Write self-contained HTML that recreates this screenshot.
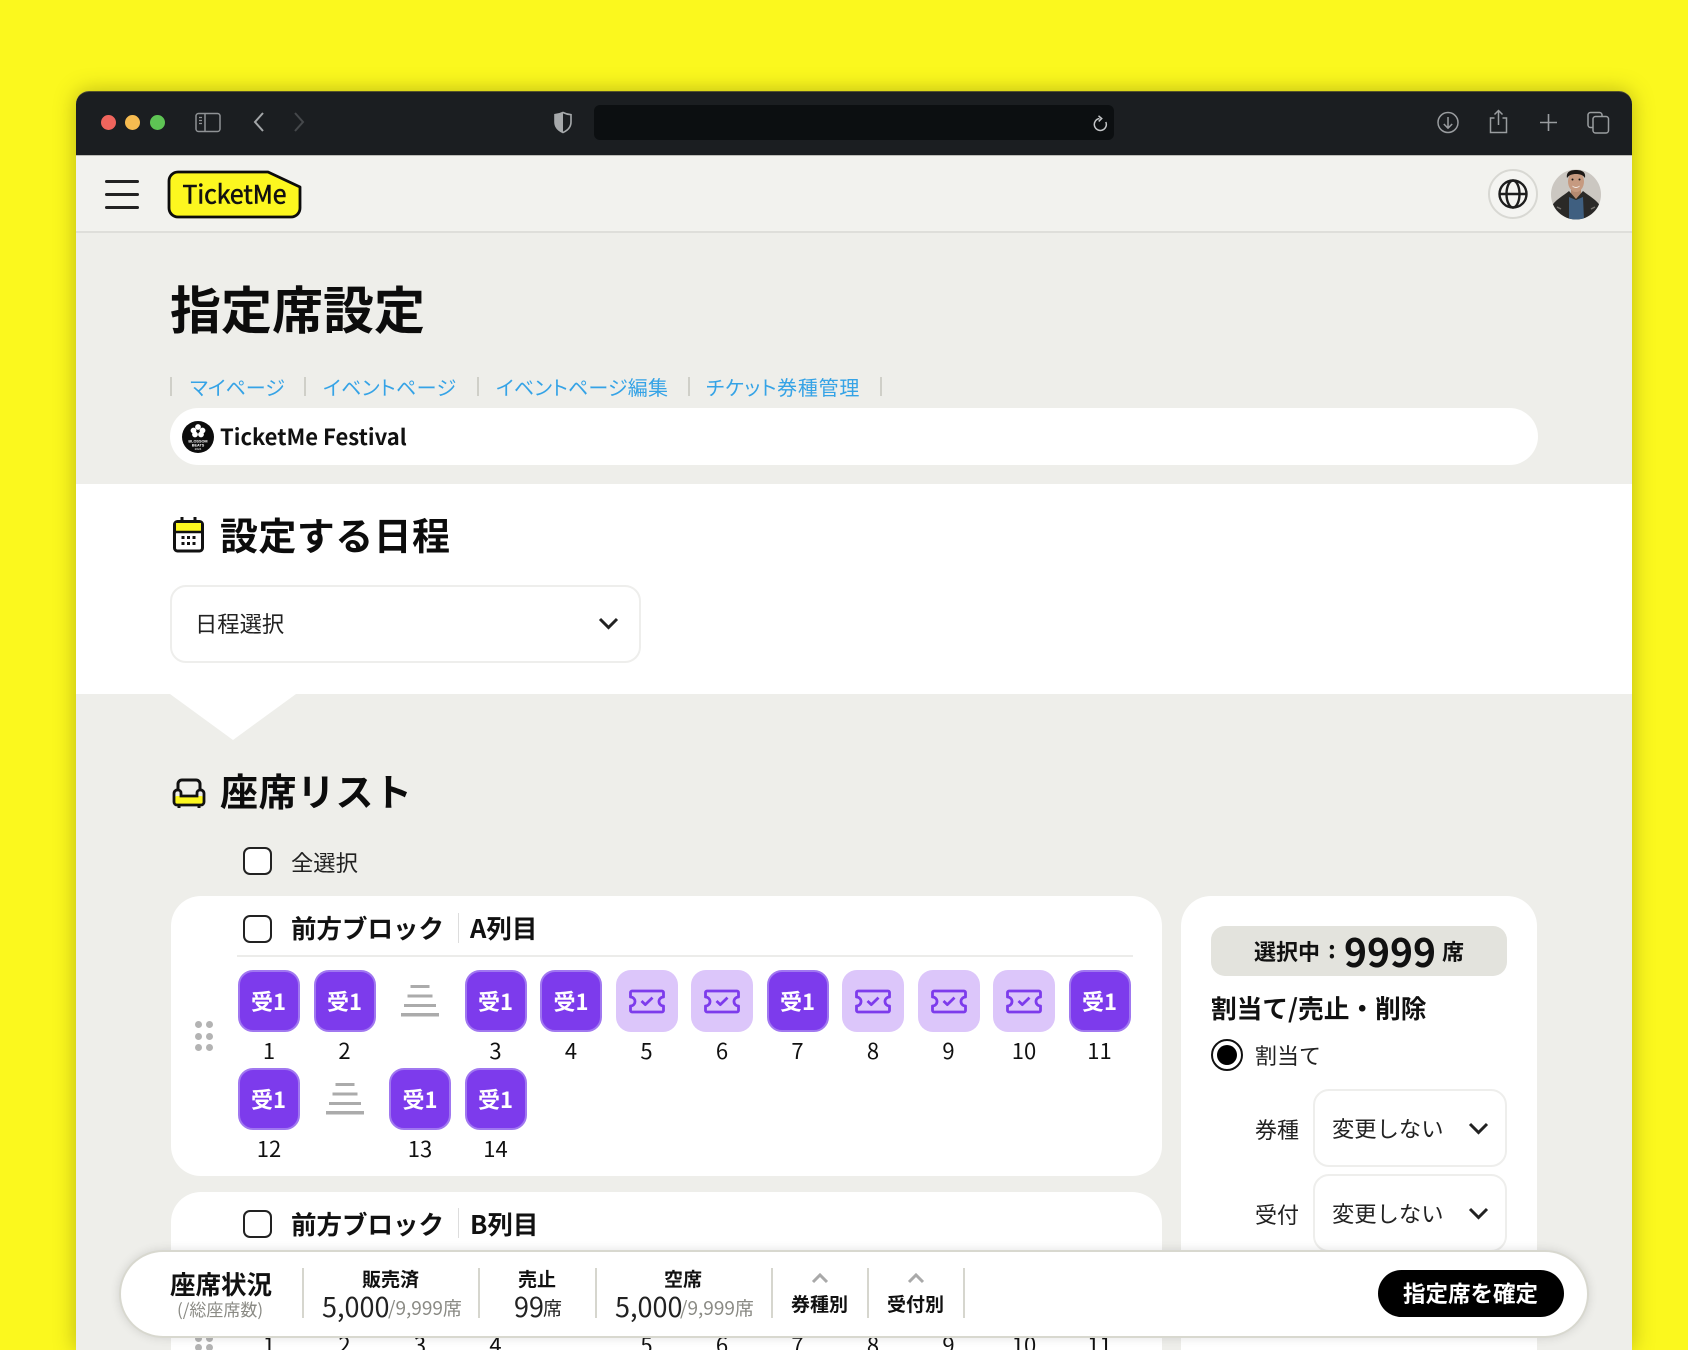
<!DOCTYPE html>
<html lang="ja"><head><meta charset="utf-8"><title>指定席設定</title>
<style>
*{box-sizing:border-box;margin:0;padding:0}
html,body{width:1688px;height:1350px;overflow:hidden;background:#fbf81e}
body{position:relative;font-family:"Noto Sans CJK JP","Liberation Sans",sans-serif;color:#111;font-feature-settings:"palt"}
.a{position:absolute}
.t{position:absolute;white-space:nowrap}
.b{font-weight:700}
#win{position:absolute;left:76px;top:91px;width:1556px;height:1259px;background:#eeeeea;border-radius:13px 13px 0 0;box-shadow:0 0 22px rgba(70,60,0,.35);overflow:hidden}
#stage{position:absolute;left:0;top:0;width:1688px;height:1350px}
.lk{color:#35a3e6;font-size:20px;line-height:30px;top:372px}
.sp{position:absolute;top:377px;width:2px;height:19px;background:#cfcfc8}
.card{position:absolute;background:#fff;border-radius:30px}
.sel{position:absolute;background:#fff;border:2px solid #eeeeec;border-radius:16px}
.cb{position:absolute;width:29px;height:28px;border:2px solid #222;border-radius:7px;background:#fff}
.s{position:absolute;width:62px;height:62px;border-radius:15px;background:#7d3bec;border:2px solid #a077f0;color:#fff;font-weight:700;font-size:22px;line-height:58px;text-align:center}
.k{position:absolute;width:62px;height:62px;border-radius:15px;background:#dcc6fa}
.k svg{position:absolute;left:13px;top:19px}
.n{position:absolute;width:62px;text-align:center;font-size:22px;line-height:30px;color:#111}
.st{position:absolute;width:38px;height:32px}
.d{position:absolute;width:7px;height:7px;border-radius:50%;background:#b3b3b3}
.dv{position:absolute;top:1268px;width:2px;height:50px;background:#d6d6ce}
.g{color:#8a8a84}
.np{font-feature-settings:normal}
</style></head><body>
<div id="win"></div>
<div id="stage">
<!-- title bar -->
<div class="a" style="left:76px;top:91px;width:1556px;height:64px;background:#1b1e21;border-radius:13px 13px 0 0;border-top:1px solid #55532a"></div>
<div class="a" style="left:76px;top:155px;width:1556px;height:78px;background:#f2f2ee;border-top:1px solid #bdbdb8;border-bottom:2px solid #dededa"></div>
<div class="a" style="left:101px;top:114.500px;width:15px;height:15px;border-radius:50%;background:#f0655d"></div>
<div class="a" style="left:125px;top:114.500px;width:15px;height:15px;border-radius:50%;background:#f6bb50"></div>
<div class="a" style="left:149.500px;top:114.500px;width:15px;height:15px;border-radius:50%;background:#5ec454"></div>
<svg class="a" style="left:195px;top:112px" width="26" height="21" viewBox="0 0 26 21" fill="none" stroke="#8f9295" stroke-width="1.500"><rect x="1" y="1.500" width="24" height="18" rx="2.500"/><path d="M10 1.500v18"/><path d="M4 5.500h3M4 8.500h3M4 11.500h3" stroke-width="1.300"/></svg>
<svg class="a" style="left:252px;top:111px" width="14" height="22" viewBox="0 0 14 22" fill="none" stroke="#a3a6a8" stroke-width="2"><path d="M11 2 3 11l8 9"/></svg>
<svg class="a" style="left:292px;top:111px" width="14" height="22" viewBox="0 0 14 22" fill="none" stroke="#45484b" stroke-width="2"><path d="M3 2l8 9-8 9"/></svg>
<svg class="a" style="left:553px;top:111px" width="20" height="23" viewBox="0 0 20 23"><path d="M10 1.500c3 1.500 5 2 8 2.200V11c0 5-3.500 8.500-8 10.500C5.500 19.500 2 16 2 11V3.700c3-.2 5-.7 8-2.200z" fill="#1b1e21" stroke="#a6a9ab" stroke-width="1.600"/><path d="M10 1.500c-3 1.500-5 2-8 2.200V11c0 5 3.500 8.500 8 10.500z" fill="#a6a9ab"/></svg>
<div class="a" style="left:594px;top:105px;width:520px;height:35px;background:#0c0f11;border-radius:6px"></div>
<svg class="a" style="left:1092px;top:115px" width="17" height="18" viewBox="0 0 17 18" fill="none" stroke="#c4c6c8" stroke-width="1.500"><path d="M7.500 3.500a6 6 0 1 0 6.300 3.500"/><path d="M6.500 .8l3.200 2.700-3 2.900"/></svg>
<svg class="a" style="left:1437px;top:111px" width="22" height="23" viewBox="0 0 22 23" fill="none" stroke="#9a9da0" stroke-width="1.500"><circle cx="11" cy="11.500" r="10"/><path d="M11 6v11M6.800 13l4.200 4.200 4.200-4.200"/></svg>
<svg class="a" style="left:1488px;top:109px" width="21" height="25" viewBox="0 0 21 25" fill="none" stroke="#9a9da0" stroke-width="1.500"><path d="M6.500 9H2.500v14.500h16V9h-4"/><path d="M10.500 16V1.500M6.500 5.500l4-4 4 4"/></svg>
<svg class="a" style="left:1539px;top:113px" width="19" height="19" viewBox="0 0 19 19" fill="none" stroke="#9a9da0" stroke-width="1.600"><path d="M9.500 1v17M1 9.500h17"/></svg>
<svg class="a" style="left:1586px;top:111px" width="24" height="23" viewBox="0 0 24 23" fill="none" stroke="#9a9da0" stroke-width="1.500"><rect x="2" y="1.500" width="14" height="15" rx="2.500"/><rect x="7" y="5.500" width="15.500" height="16.500" rx="2.500" fill="#1b1e21"/></svg>

<!-- header -->
<div class="a" style="left:105px;top:179.500px;width:34px;height:3px;background:#222;border-radius:2px"></div>
<div class="a" style="left:105px;top:192.500px;width:34px;height:3px;background:#222;border-radius:2px"></div>
<div class="a" style="left:105px;top:205.500px;width:34px;height:3px;background:#222;border-radius:2px"></div>
<svg class="a" style="left:167px;top:170px" width="136" height="49" viewBox="0 0 136 49"><path d="M11 2H101L133 17V38a9 9 0 0 1-9 9H11a9 9 0 0 1-9-9V11a9 9 0 0 1 9-9z" fill="#fcf71f" stroke="#0c0c0c" stroke-width="2.800" stroke-linejoin="round"/><text x="15.500" y="33.500" font-family="'Noto Sans CJK JP',sans-serif" font-size="25.500" font-weight="400" fill="#111" stroke="#111" stroke-width=".6" textLength="104" lengthAdjust="spacingAndGlyphs">TicketMe</text></svg>
<div class="a" style="left:1488px;top:169px;width:50px;height:50px;border-radius:50%;border:2px solid #d8d8d3;background:#f4f4f1"></div>
<svg class="a" style="left:1498px;top:179px" width="30" height="30" viewBox="0 0 30 30" fill="none" stroke="#1d1d1d" stroke-width="2.400"><circle cx="15" cy="15" r="13.500"/><ellipse cx="15" cy="15" rx="6.500" ry="13.500"/><path d="M2 15h26"/></svg>
<svg class="a" style="left:1551px;top:169px" width="50" height="51" viewBox="0 0 50 51"><defs><clipPath id="av"><circle cx="25" cy="25.500" r="25"/></clipPath></defs><g clip-path="url(#av)"><rect width="50" height="51" fill="#cbc7c1"/><rect x="20" y="18" width="10" height="12" fill="#b58a70"/><path d="M0 51V38C4 31 12 27 18 22L25 30 32 22C38 27 46 31 50 38V51z" fill="#2a2927"/><path d="M18 28l7 3 7-3 1 23H18z" fill="#3f5f80"/><ellipse cx="25" cy="12.500" rx="8" ry="10.500" fill="#c69a80"/><path d="M16 9C15 3 19 1 25 1s10 2 9 8c-2-3-5-4-9-4s-7 1-9 4z" fill="#1c1815"/><path d="M21 16.500c2 2 6 2 8 0-1 3-7 3-8 0z" fill="#fff"/><circle cx="21.500" cy="10.500" r="1" fill="#1a1714"/><circle cx="28.500" cy="10.500" r="1" fill="#1a1714"/><path d="M6 38l4 2M44 38l-4 2" stroke="#77746f" stroke-width="1.500"/></g></svg>

<!-- title -->
<div class="t b np" style="left:170px;top:271px;font-size:51px;line-height:72px;color:#0c0c0c">指定席設定</div>
<div class="sp" style="left:170px"></div>
<div class="t lk" style="left:190px">マイページ</div>
<div class="sp" style="left:304px"></div>
<div class="t lk" style="left:323px;letter-spacing:.45px">イベントページ</div>
<div class="sp" style="left:477px"></div>
<div class="t lk" style="left:496px;letter-spacing:.2px">イベントページ編集</div>
<div class="sp" style="left:688px"></div>
<div class="t lk" style="left:706px;letter-spacing:.75px">チケット券種管理</div>
<div class="sp" style="left:880px"></div>
<div class="a" style="left:170px;top:408px;width:1368px;height:57px;background:#fff;border-radius:28.500px"></div>
<svg class="a" style="left:182px;top:421px" width="32" height="32" viewBox="0 0 32 32"><circle cx="16" cy="16" r="16" fill="#0c0c0c"/><g fill="#fff"><circle cx="16" cy="6" r="2.900"/><circle cx="11.500" cy="9.500" r="2.900"/><circle cx="20.500" cy="9.500" r="2.900"/><circle cx="13" cy="13.500" r="2.900"/><circle cx="19" cy="13.500" r="2.900"/><text x="16" y="21.500" font-size="3.800" text-anchor="middle" font-family="'Liberation Sans',sans-serif" font-weight="700">BLOSSOM</text><text x="16" y="25.500" font-size="3.800" text-anchor="middle" font-family="'Liberation Sans',sans-serif" font-weight="700">BEATS</text><text x="16" y="29" font-size="3" text-anchor="middle" font-family="'Liberation Sans',sans-serif">2024</text></g></svg>
<div class="t b" style="left:220px;top:418px;font-size:22px;line-height:36px;color:#111">TicketMe Festival</div>

<!-- schedule section -->
<div class="a" style="left:76px;top:484px;width:1556px;height:210px;background:#fff"></div>
<svg class="a" style="left:170px;top:694px" width="126" height="46" viewBox="0 0 126 46"><path d="M0 0H126L63 46z" fill="#fff"/></svg>
<svg class="a" style="left:172px;top:516px" width="33" height="37" viewBox="0 0 33 37"><rect x="2.500" y="5.500" width="28" height="29.500" rx="3" fill="#fff" stroke="#111" stroke-width="3"/><path d="M4 7h25v8H4z" fill="#fcf71f"/><path d="M3 16h27" stroke="#111" stroke-width="2.500"/><path d="M10 1v6M23 1v6" stroke="#111" stroke-width="3"/><g fill="#111"><rect x="9.500" y="20" width="3" height="3"/><rect x="15" y="20" width="3" height="3"/><rect x="20.500" y="20" width="3" height="3"/><rect x="9.500" y="26" width="3" height="3"/><rect x="15" y="26" width="3" height="3"/><rect x="20.500" y="26" width="3" height="3"/></g></svg>
<div class="t b np" style="left:220px;top:508px;font-size:38px;line-height:52px;letter-spacing:.4px;color:#0c0c0c">設定する日程</div>
<div class="sel" style="left:170px;top:585px;width:471px;height:78px"></div>
<div class="t np" style="left:195px;top:606px;font-size:22.300px;line-height:34px;color:#222">日程選択</div>
<svg class="a" style="left:597px;top:616px" width="23" height="15" viewBox="0 0 23 15" fill="none" stroke="#222" stroke-width="3"><path d="M3 3l8.500 8.500L20 3"/></svg>

<!-- seat list heading -->
<svg class="a" style="left:172px;top:778px" width="34" height="31" viewBox="0 0 34 31" fill="none"><rect x="3" y="18" width="28" height="9" rx="2" fill="#fcf71f"/><path d="M6 13V6a4 4 0 0 1 4-4h14a4 4 0 0 1 4 4v7" stroke="#111" stroke-width="3"/><path d="M6 12a3 3 0 0 1 3 3v3h16v-3a3 3 0 0 1 3-3 3.500 3.500 0 0 1 4 3.500V24a3 3 0 0 1-3 3H5a3 3 0 0 1-3-3v-8.500A3.500 3.500 0 0 1 6 12z" stroke="#111" stroke-width="2.800"/><path d="M7 27v3M27 27v3" stroke="#111" stroke-width="3"/></svg>
<div class="t b np" style="left:220px;top:764px;font-size:38px;line-height:52px;letter-spacing:.5px;color:#0c0c0c">座席リスト</div>
<div class="cb" style="left:243px;top:847px"></div>
<div class="t np" style="left:291px;top:845px;font-size:22.300px;line-height:34px;color:#222">全選択</div>

<!-- card A -->
<div class="card" style="left:171px;top:896px;width:991px;height:280px"></div>
<div class="cb" style="left:243px;top:915px"></div>
<div class="t b np" style="left:291px;top:910px;font-size:25.500px;line-height:36px;color:#111">前方ブロック</div>
<div class="a" style="left:458px;top:913px;width:1px;height:30px;background:#ddd"></div>
<div class="t b" style="left:470px;top:910px;font-size:25.500px;line-height:36px;color:#111">A列目</div>
<div class="a" style="left:237px;top:955px;width:896px;height:2px;background:#ececea"></div>
<div class="d" style="left:195px;top:1021px"></div><div class="d" style="left:206px;top:1021px"></div>
<div class="d" style="left:195px;top:1033px"></div><div class="d" style="left:206px;top:1033px"></div>
<div class="d" style="left:195px;top:1044px"></div><div class="d" style="left:206px;top:1044px"></div>

<div class="s" style="left:237.500px;top:970px">受1</div><div class="n" style="left:238px;top:1035px">1</div>
<div class="s" style="left:313.500px;top:970px">受1</div><div class="n" style="left:313.500px;top:1035px">2</div>
<svg class="st" style="left:401px;top:985px" viewBox="0 0 38 32" fill="#ababab"><rect x="9.500" y="0" width="19" height="3"/><rect x="6.500" y="9.500" width="25" height="3"/><rect x="3" y="19" width="32" height="3"/><rect x="0" y="28" width="38" height="3.500"/></svg>
<div class="s" style="left:464.500px;top:970px">受1</div><div class="n" style="left:464.500px;top:1035px">3</div>
<div class="s" style="left:540px;top:970px">受1</div><div class="n" style="left:540px;top:1035px">4</div>
<div class="k" style="left:615.500px;top:970px"><svg width="36" height="25" viewBox="0 0 36 25" fill="none" stroke="#7d3bec" stroke-width="2.800" stroke-linejoin="round"><path d="M3 2H33a1.500 1.500 0 0 1 1.500 1.500V8a4.500 4.500 0 0 0 0 9v4.500A1.500 1.500 0 0 1 33 23H3a1.500 1.500 0 0 1-1.500-1.500V17a4.500 4.500 0 0 0 0-9V3.500A1.500 1.500 0 0 1 3 2z"/><path d="M12.500 12l3.800 3.600 7.200-7"/></svg></div><div class="n" style="left:615.500px;top:1035px">5</div>
<div class="k" style="left:691px;top:970px"><svg width="36" height="25" viewBox="0 0 36 25" fill="none" stroke="#7d3bec" stroke-width="2.800" stroke-linejoin="round"><path d="M3 2H33a1.500 1.500 0 0 1 1.500 1.500V8a4.500 4.500 0 0 0 0 9v4.500A1.500 1.500 0 0 1 33 23H3a1.500 1.500 0 0 1-1.500-1.500V17a4.500 4.500 0 0 0 0-9V3.500A1.500 1.500 0 0 1 3 2z"/><path d="M12.500 12l3.800 3.600 7.200-7"/></svg></div><div class="n" style="left:691px;top:1035px">6</div>
<div class="s" style="left:766.500px;top:970px">受1</div><div class="n" style="left:766.500px;top:1035px">7</div>
<div class="k" style="left:842px;top:970px"><svg width="36" height="25" viewBox="0 0 36 25" fill="none" stroke="#7d3bec" stroke-width="2.800" stroke-linejoin="round"><path d="M3 2H33a1.500 1.500 0 0 1 1.500 1.500V8a4.500 4.500 0 0 0 0 9v4.500A1.500 1.500 0 0 1 33 23H3a1.500 1.500 0 0 1-1.500-1.500V17a4.500 4.500 0 0 0 0-9V3.500A1.500 1.500 0 0 1 3 2z"/><path d="M12.500 12l3.800 3.600 7.200-7"/></svg></div><div class="n" style="left:842px;top:1035px">8</div>
<div class="k" style="left:917.500px;top:970px"><svg width="36" height="25" viewBox="0 0 36 25" fill="none" stroke="#7d3bec" stroke-width="2.800" stroke-linejoin="round"><path d="M3 2H33a1.500 1.500 0 0 1 1.500 1.500V8a4.500 4.500 0 0 0 0 9v4.500A1.500 1.500 0 0 1 33 23H3a1.500 1.500 0 0 1-1.500-1.500V17a4.500 4.500 0 0 0 0-9V3.500A1.500 1.500 0 0 1 3 2z"/><path d="M12.500 12l3.800 3.600 7.200-7"/></svg></div><div class="n" style="left:917.500px;top:1035px">9</div>
<div class="k" style="left:993px;top:970px"><svg width="36" height="25" viewBox="0 0 36 25" fill="none" stroke="#7d3bec" stroke-width="2.800" stroke-linejoin="round"><path d="M3 2H33a1.500 1.500 0 0 1 1.500 1.500V8a4.500 4.500 0 0 0 0 9v4.500A1.500 1.500 0 0 1 33 23H3a1.500 1.500 0 0 1-1.500-1.500V17a4.500 4.500 0 0 0 0-9V3.500A1.500 1.500 0 0 1 3 2z"/><path d="M12.500 12l3.800 3.600 7.200-7"/></svg></div><div class="n" style="left:993px;top:1035px">10</div>
<div class="s" style="left:1068.500px;top:970px">受1</div><div class="n" style="left:1068.500px;top:1035px">11</div>

<div class="s" style="left:237.500px;top:1067.500px">受1</div><div class="n" style="left:238px;top:1133px">12</div>
<svg class="st" style="left:325.500px;top:1083px" viewBox="0 0 38 32" fill="#ababab"><rect x="9.500" y="0" width="19" height="3"/><rect x="6.500" y="9.500" width="25" height="3"/><rect x="3" y="19" width="32" height="3"/><rect x="0" y="28" width="38" height="3.500"/></svg>
<div class="s" style="left:389px;top:1067.500px">受1</div><div class="n" style="left:389px;top:1133px">13</div>
<div class="s" style="left:464.500px;top:1067.500px">受1</div><div class="n" style="left:464.500px;top:1133px">14</div>

<!-- card B -->
<div class="card" style="left:171px;top:1192px;width:991px;height:200px"></div>
<div class="cb" style="left:243px;top:1210px"></div>
<div class="t b np" style="left:291px;top:1206px;font-size:25.500px;line-height:36px;color:#111">前方ブロック</div>
<div class="a" style="left:458px;top:1208px;width:1px;height:30px;background:#ddd"></div>
<div class="t b" style="left:470px;top:1206px;font-size:25.500px;line-height:36px;color:#111">B列目</div>
<div class="d" style="left:195px;top:1335px"></div><div class="d" style="left:206px;top:1335px"></div>
<div class="d" style="left:195px;top:1344px"></div><div class="d" style="left:206px;top:1344px"></div>
<div class="n" style="left:238px;top:1329px">1</div>
<div class="n" style="left:313.500px;top:1329px">2</div>
<div class="n" style="left:389px;top:1329px">3</div>
<div class="n" style="left:464.500px;top:1329px">4</div>
<div class="n" style="left:615.500px;top:1329px">5</div>
<div class="n" style="left:691px;top:1329px">6</div>
<div class="n" style="left:766.500px;top:1329px">7</div>
<div class="n" style="left:842px;top:1329px">8</div>
<div class="n" style="left:917.500px;top:1329px">9</div>
<div class="n" style="left:993px;top:1329px">10</div>
<div class="n" style="left:1068.500px;top:1329px">11</div>

<!-- side panel -->
<div class="card" style="left:1181px;top:896px;width:356px;height:500px"></div>
<div class="a" style="left:1211px;top:926px;width:296px;height:50px;background:#e3e3dd;border-radius:14px"></div>
<div class="t b np" style="left:1254px;top:934px;font-size:22px;line-height:34px;color:#111">選択中</div>
<div class="t b" style="left:1328px;top:931px;font-size:24px;line-height:34px;color:#111">:</div>
<div class="t b" style="left:1344px;top:921px;font-size:39px;line-height:60px;color:#111">9999</div>
<div class="t b" style="left:1442px;top:934px;font-size:22px;line-height:34px;color:#111">席</div>
<div class="t b np" style="left:1211px;top:990px;font-size:25.700px;line-height:36px;color:#111">割当て/売止・削除</div>
<div class="a" style="left:1211px;top:1039px;width:32px;height:32px;border-radius:50%;border:2px solid #111;background:#fff"></div>
<div class="a" style="left:1217px;top:1045px;width:20px;height:20px;border-radius:50%;background:#000"></div>
<div class="t np" style="left:1255px;top:1038px;font-size:22px;line-height:34px;color:#222">割当て</div>
<div class="t np" style="left:1255px;top:1112px;font-size:22px;line-height:34px;color:#222">券種</div>
<div class="sel" style="left:1313px;top:1089px;width:194px;height:78px"></div>
<div class="t np" style="left:1332px;top:1111px;font-size:22.300px;line-height:34px;color:#222">変更しない</div>
<svg class="a" style="left:1467px;top:1121px" width="23" height="15" viewBox="0 0 23 15" fill="none" stroke="#222" stroke-width="3"><path d="M3 3l8.500 8.500L20 3"/></svg>
<div class="t np" style="left:1255px;top:1196.500px;font-size:22px;line-height:34px;color:#222">受付</div>
<div class="sel" style="left:1313px;top:1174px;width:194px;height:78px"></div>
<div class="t np" style="left:1332px;top:1195.500px;font-size:22.300px;line-height:34px;color:#222">変更しない</div>
<svg class="a" style="left:1467px;top:1206px" width="23" height="15" viewBox="0 0 23 15" fill="none" stroke="#222" stroke-width="3"><path d="M3 3l8.500 8.500L20 3"/></svg>

<!-- status bar -->
<div class="a" style="left:119px;top:1249.500px;width:1470px;height:88.500px;background:#fff;border:2px solid #d8d8cf;border-radius:44px;box-shadow:0 0 10px rgba(0,0,0,.12)"></div>
<div class="t b np" style="left:170px;top:1265.500px;font-size:25.500px;line-height:36px;color:#111">座席状況</div>
<div class="t g" style="left:177px;top:1296px;font-size:17px;line-height:26px">(/総座席数)</div>
<div class="dv" style="left:302px"></div>
<div class="t b np" style="left:362px;top:1264.500px;font-size:19px;line-height:28px;color:#111">販売済</div>
<div class="t" style="left:322px;top:1286px;font-size:27px;line-height:40px;color:#222">5,000</div>
<div class="t g" style="left:388px;top:1293px;font-size:19px;line-height:30px">/9,999席</div>
<div class="dv" style="left:478px"></div>
<div class="t b np" style="left:518px;top:1264.500px;font-size:19px;line-height:28px;color:#111">売止</div>
<div class="t" style="left:514px;top:1286px;font-size:27px;line-height:40px;color:#222">99</div>
<div class="t" style="left:543px;top:1293px;font-size:19px;line-height:30px;color:#222">席</div>
<div class="dv" style="left:595px"></div>
<div class="t b np" style="left:664px;top:1264.500px;font-size:19px;line-height:28px;color:#111">空席</div>
<div class="t" style="left:615px;top:1286px;font-size:27px;line-height:40px;color:#222">5,000</div>
<div class="t g" style="left:680px;top:1293px;font-size:19px;line-height:30px">/9,999席</div>
<div class="dv" style="left:771px"></div>
<svg class="a" style="left:810px;top:1272px" width="20" height="12" viewBox="0 0 20 12" fill="none" stroke="#a9a9a9" stroke-width="3"><path d="M3 10l7-7 7 7"/></svg>
<div class="t b np" style="left:791px;top:1290px;font-size:19px;line-height:28px;color:#111">券種別</div>
<div class="dv" style="left:867px"></div>
<svg class="a" style="left:906px;top:1272px" width="20" height="12" viewBox="0 0 20 12" fill="none" stroke="#a9a9a9" stroke-width="3"><path d="M3 10l7-7 7 7"/></svg>
<div class="t b np" style="left:887px;top:1290px;font-size:19px;line-height:28px;color:#111">受付別</div>
<div class="dv" style="left:963px"></div>
<div class="a" style="left:1378px;top:1270px;width:186px;height:47px;background:#000;border-radius:24px"></div>
<div class="t b np" style="left:1403px;top:1276px;font-size:22.500px;line-height:34px;color:#fff">指定席を確定</div>
</div>
</body></html>
